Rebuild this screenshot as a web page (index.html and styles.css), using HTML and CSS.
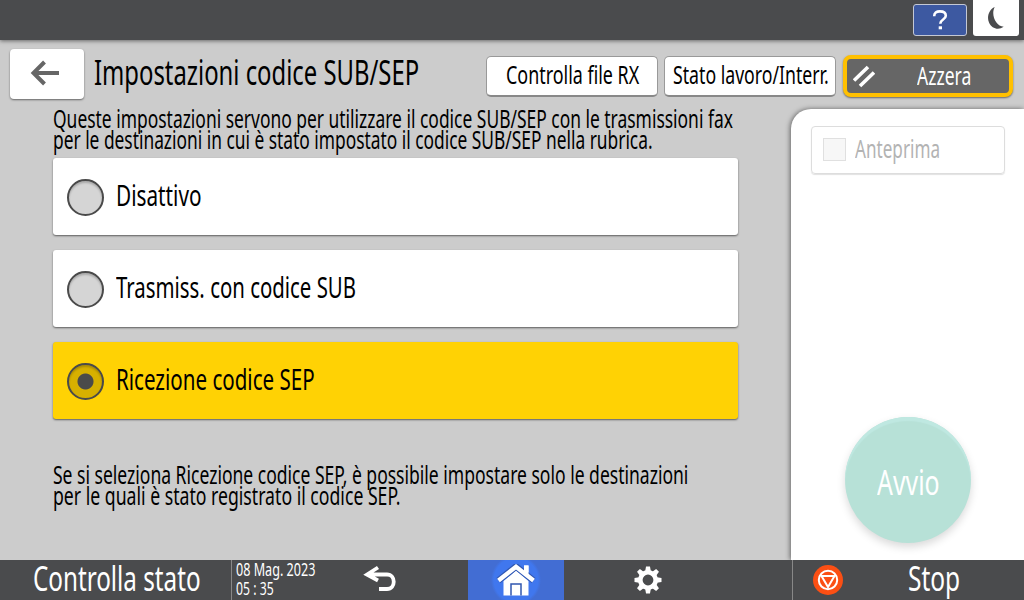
FILE: index.html
```html
<!DOCTYPE html>
<html lang="it">
<head>
    <meta charset="UTF-8">
    <meta name="viewport" content="width=device-width, initial-scale=1.0">
    <title>Impostazioni codice SUB/SEP</title>
    <link rel="stylesheet" href="styles.css">
</head>
<body>
    <div class="screen">
        <div class="topbar">
            <button class="help-btn">
                <svg width="18" height="20" viewBox="0 0 18 20"><path d="M3.2 6.2C3.2 3 5.4 1.4 8.9 1.4c3.600 0 5.900 1.500 5.900 4.300 0 4-5.500 3.600-5.500 8" fill="none" stroke="#fff" stroke-width="2.600"/><rect x="7.700" y="16.300" width="3.300" height="3" fill="#fff"/></svg>
            </button>
            <button class="sleep-btn">
                <svg width="18" height="24" viewBox="0 0 18 24"><path d="M6.700 1C1 3.500-1.500 11 1 16.500c2.800 6.300 9.500 8 14.700 4.300C8 20.500 2.500 9 6.700 1z" fill="#4a4b4d"/></svg>
            </button>
        </div>
        <div class="header">
            <button class="back-btn">
                <svg width="30" height="26" viewBox="0 0 30 26"><path d="M14.500 2L3.500 13l11 11M3.500 13H29" fill="none" stroke="#666" stroke-width="4"/></svg>
            </button>
            <h1 class="title"><span class="t t-title">Impostazioni codice SUB/SEP</span></h1>
            <button class="btn btn-rx"><span class="t t-rx">Controlla file RX</span></button>
            <button class="btn btn-job"><span class="t t-job">Stato lavoro/Interr.</span></button>
            <button class="reset-btn">
                <svg width="22" height="23" viewBox="0 0 22 23"><path d="M1 15.500L15 2M7 21L21 7.500" fill="none" stroke="#fff" stroke-width="3.600"/></svg>
                <span class="t t-reset">Azzera</span>
            </button>
        </div>
        <div class="main">
            <div class="content">
                <p class="intro">
                    <span class="t t-intro1">Queste impostazioni servono per utilizzare il codice SUB/SEP con le trasmissioni fax</span>
                    <span class="t t-intro2">per le destinazioni in cui è stato impostato il codice SUB/SEP nella rubrica.</span>
                </p>
                <div class="options">
                    <div class="option"><span class="radio"></span><span class="t t-opt1">Disattivo</span></div>
                    <div class="option"><span class="radio"></span><span class="t t-opt2">Trasmiss. con codice SUB</span></div>
                    <div class="option selected"><span class="radio"></span><span class="t t-opt3">Ricezione codice SEP</span></div>
                </div>
                <p class="note">
                    <span class="t t-note1">Se si seleziona Ricezione codice SEP, è possibile impostare solo le destinazioni</span>
                    <span class="t t-note2">per le quali è stato registrato il codice SEP.</span>
                </p>
            </div>
            <div class="panel">
                <div class="preview"><span class="checkbox"></span><span class="t t-preview">Anteprima</span></div>
                <button class="start-btn"><span class="t t-start">Avvio</span></button>
            </div>
        </div>
        <div class="footer">
            <div class="status"><span class="t t-status">Controlla stato</span></div>
            <div class="clock">
                <span class="t t-date">08 Mag. 2023</span>
                <span class="t t-time">05 : 35</span>
            </div>
            <div class="nav-back">
                <svg width="34" height="28" viewBox="0 0 34 28"><path d="M15 2.500L4 9.500l11 6M5 9.500h19c9 0 9 14.500 0 14.500h-8" fill="none" stroke="#fff" stroke-width="3.800"/></svg>
            </div>
            <div class="nav-home">
                <svg width="40" height="34" viewBox="0 0 40 34"><path d="M28 1.500h4.500v10l-4.500-4z" fill="#fff"/><path d="M7.500 17L20 6.500 32.500 17v14.500H7.500z" fill="#fff"/><path d="M2.500 16.500L20 2.500l17.500 14" fill="none" stroke="#3157b0" stroke-width="6.600"/><path d="M28 1.500h4.500v10l-4.500-4z" fill="#fff"/><path d="M2.500 16.500L20 2.800l17.500 13.700" fill="none" stroke="#fff" stroke-width="4.400"/><path d="M15 31.500V20h10v11.500" fill="none" stroke="#3157b0" stroke-width="1.500"/></svg>
            </div>
            <div class="nav-settings">
                <svg width="28" height="28" viewBox="-14 -14 28 28"><circle r="7.700" fill="none" stroke="#fff" stroke-width="4.600"/><g fill="#fff"><path id="tooth" d="M-2.800-9l.8-4.500h4l.8 4.500z"/><use href="#tooth" transform="rotate(45)"/><use href="#tooth" transform="rotate(90)"/><use href="#tooth" transform="rotate(135)"/><use href="#tooth" transform="rotate(180)"/><use href="#tooth" transform="rotate(225)"/><use href="#tooth" transform="rotate(270)"/><use href="#tooth" transform="rotate(315)"/></g></svg>
            </div>
            <div class="stop">
                <svg width="30" height="30" viewBox="0 0 30 30"><circle cx="15" cy="15" r="15" fill="#fb4f14"/><circle cx="15" cy="15" r="9.200" fill="none" stroke="#fff" stroke-width="2"/><path d="M8.500 11h13L15 22z" fill="none" stroke="#fff" stroke-width="2"/></svg>
                <span class="t t-stop">Stop</span>
            </div>
        </div>
    </div>
</body>
</html>
```
FILE: styles.css
```css
* {
    box-sizing: border-box;
}
body {
    margin: 0;
    font-family: "Noto Sans", "Open Sans", sans-serif;
    color: #000;
}
button {
    border: none;
    padding: 0;
    font-family: inherit;
}
svg {
    display: block;
    flex: none;
}
p, h1 {
    margin: 0;
    font-weight: 400;
}
.screen {
    width: 1024px;
    height: 600px;
    display: flex;
    flex-direction: column;
    background: #ccc;
    overflow: hidden;
}
/* condensed labels */
.t {
    display: block;
    width: max-content;
    white-space: nowrap;
    transform-origin: 0 50%;
    transform: scaleX(0.7);
}
.t-title {
    transform: scaleX(0.701);
}
.t-rx {
    transform: scaleX(0.716);
}
.t-job {
    transform: scaleX(0.707);
}
.t-intro1 {
    transform: scaleX(0.697);
}
.t-intro2 {
    transform: scaleX(0.694);
}
.t-opt1 {
    transform: scaleX(0.704);
}
.t-opt2 {
    transform: scaleX(0.691);
}
.t-opt3 {
    transform: scaleX(0.697);
}
.t-note1 {
    transform: scaleX(0.701);
}
.t-note2 {
    transform: scaleX(0.706);
}
.t-preview {
    transform: scaleX(0.685);
}
.t-start {
    transform: scaleX(0.71);
}
.t-status {
    transform: scaleX(0.692);
}
.t-time {
    transform: scaleX(0.68);
}
.topbar {
    height: 40px;
    flex: none;
    display: flex;
    justify-content: flex-end;
    gap: 6px;
    padding-right: 5px;
    background: #4a4b4d;
    box-shadow: 0 1px 4px rgba(0, 0, 0, 0.5);
}
.help-btn {
    width: 54px;
    height: 32px;
    margin-top: 4px;
    display: flex;
    align-items: center;
    justify-content: center;
    background: #3d59a1;
    border: 1px solid #c4c8d4;
    border-radius: 3px;
}
.sleep-btn {
    width: 46px;
    height: 36px;
    display: flex;
    align-items: flex-start;
    padding: 6px 0 0 15px;
    background: #fff;
    border-radius: 0 0 3px 3px;
}
.header {
    height: 68px;
    flex: none;
    display: flex;
    padding: 9px 0 0 10px;
}
.back-btn {
    width: 74px;
    height: 50px;
    display: flex;
    padding: 11px 0 0 20px;
    background: #fff;
    border-radius: 4px;
    box-shadow: 0 1px 2px rgba(0, 0, 0, 0.5);
}
.title {
    width: 402px;
    height: 48px;
    padding-left: 10px;
    font-size: 34px;
    line-height: 48px;
    margin-top: -1px;
}
.btn {
    width: 172px;
    height: 41px;
    margin: 7px 6px 0 0;
    display: flex;
    background: #fff;
    border: 1px solid #999;
    border-bottom: 2px solid #888;
    border-radius: 5px;
    font-size: 25px;
    line-height: 35px;
    color: #000;
}
.btn-rx {
    padding-left: 19px;
}
.btn-job {
    padding-left: 8px;
}
.reset-btn {
    width: 170px;
    height: 42px;
    margin: 6px 0 0 1px;
    display: flex;
    padding-left: 6px;
    background: #666;
    border: 4px solid #ffc000;
    border-radius: 8px;
    box-shadow: 0 1px 2px rgba(0, 0, 0, 0.5);
    font-size: 25px;
    line-height: 32px;
    color: #fff;
}
.reset-btn svg {
    margin: 6px 42px 0 0;
}
.main {
    flex: 1;
    display: flex;
}
.content {
    width: 791px;
    padding-left: 53px;
}
.intro, .note {
    font-size: 25px;
    line-height: 21px;
    height: 42px;
}
.options {
    display: grid;
    gap: 15px;
    width: 685px;
    margin: 8px 0 45px;
}
.option {
    height: 77px;
    display: flex;
    padding-left: 14px;
    gap: 12px;
    background: #fff;
    border-radius: 3px;
    box-shadow: 0 1px 2px rgba(0, 0, 0, 0.55);
    font-size: 29.5px;
    line-height: 73px;
}
.radio {
    width: 37px;
    height: 37px;
    margin-top: 21px;
    border: 2px solid #4a4a4a;
    border-radius: 50%;
    background: #d5d5d5;
    box-shadow: inset 0 2px 2px rgba(0, 0, 0, 0.2);
}
.selected {
    background: #ffd204;
}
.selected .radio {
    background: radial-gradient(circle, #4a4a4a 7.5px, #d7b000 8.5px);
}
.panel {
    flex: 1;
    margin-top: 1px;
    padding: 17px 0 0 20px;
    background: #fff;
    border-radius: 20px 0 0 0;
    box-shadow: -1px 0 5px rgba(0, 0, 0, 0.5);
}
.preview {
    width: 194px;
    height: 48px;
    display: flex;
    padding-left: 11px;
    border: 1px solid #ddd;
    border-radius: 4px;
    box-shadow: 0 1px 1px rgba(0, 0, 0, 0.12);
    font-size: 25px;
    line-height: 43px;
    color: #b3b3b3;
}
.checkbox {
    width: 23px;
    height: 23px;
    margin: 11px 9px 0 0;
    background: #f7f7f7;
    border: 1px solid #e0e0e0;
}
.start-btn {
    width: 126px;
    height: 126px;
    display: flex;
    margin: 243px 0 0 34px;
    padding-left: 32px;
    border-radius: 50%;
    background: #b7e1d7;
    box-shadow: 0 4px 8px rgba(0, 0, 0, 0.15), inset 0 4px 1px #bfe8e1;
    font-size: 35px;
    line-height: 129px;
    color: #fff;
}
.footer {
    height: 40px;
    flex: none;
    display: flex;
    background: #4a4b4d;
    color: #fff;
    position: relative;
}
.status {
    width: 231px;
    padding-left: 33px;
    font-size: 35px;
    line-height: 35px;
}
.clock {
    width: 132px;
    padding-left: 4px;
    border-left: 1px solid #888;
    font-size: 18px;
    line-height: 19px;
}
.nav-back {
    width: 105px;
    padding-top: 5px;
}
.nav-home {
    width: 96px;
    display: flex;
    justify-content: center;
    padding-top: 4px;
    background: radial-gradient(circle at 50% 50%, #4077ee 22px, #426dd3 25px);
}
.nav-settings {
    width: 228px;
    padding: 6px 0 0 70px;
}
.stop {
    flex: 1;
    display: flex;
    padding-left: 20px;
    border-left: 1px solid #888;
    font-size: 35px;
    line-height: 35px;
}
.stop svg {
    margin: 5px 65px 0 0;
}
```
